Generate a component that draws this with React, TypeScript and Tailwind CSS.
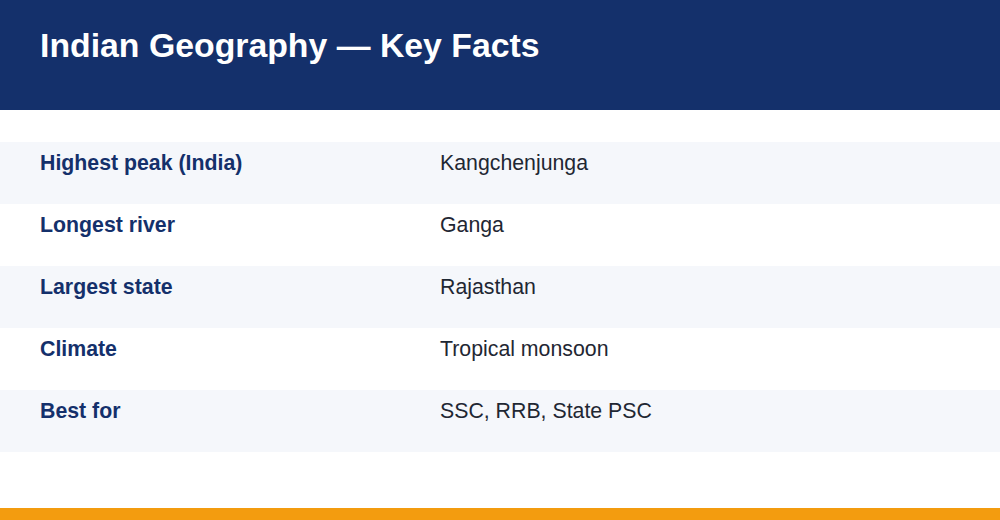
import React from "react";

const rows: [string, string][] = [
  ["Highest peak (India)", "Kangchenjunga"],
  ["Longest river", "Ganga"],
  ["Largest state", "Rajasthan"],
  ["Climate", "Tropical monsoon"],
  ["Best for", "SSC, RRB, State PSC"],
];

export default function App() {
  return (
    <div
      className="w-[1000px] h-[520px] flex flex-col bg-white overflow-hidden"
      style={{ fontFamily: '"Liberation Sans", Arial, sans-serif' }}
    >
      <div className="h-[110px] bg-[#14306b] px-[40px] pt-[26px] shrink-0">
        <h1 className="text-[33.8px] font-bold text-white leading-[39px]">
          Indian Geography — Key Facts
        </h1>
      </div>
      <div className="pt-[32px] flex flex-col">
        {rows.map(([k, v], i) => (
          <div
            key={k}
            className={`h-[62px] flex pt-[6px] ${i % 2 === 0 ? "bg-[#f5f7fb]" : "bg-white"}`}
          >
            <div className="w-[440px] shrink-0 pl-[40px] text-[21.3px] leading-[30px] font-bold text-[#14306b]">
              {k}
            </div>
            <div className="text-[21.3px] leading-[30px] text-[#1f2733]">{v}</div>
          </div>
        ))}
      </div>
      <div className="flex-1" />
      <div className="h-[12px] bg-[#f39c0f] shrink-0" />
    </div>
  );
}
